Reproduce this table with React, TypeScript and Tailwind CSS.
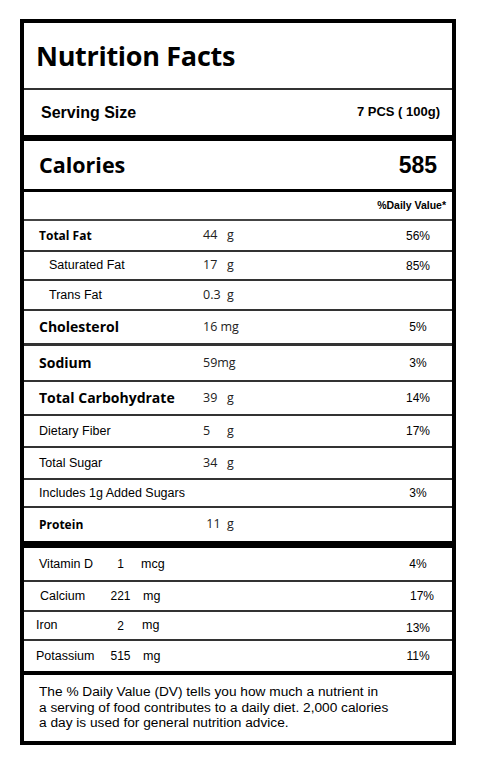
const sans = "font-['Liberation_Sans',Arial,sans-serif]";
const humanist = "font-['Open_Sans','Noto_Sans',sans-serif]";

type Row = {
  label: string;
  amount?: [string, string];
  dv?: string;
  h: string;
  border: string;
  kind: "bold" | "big" | "plain" | "indent";
};

const rows: Row[] = [
  { label: "Total Fat", amount: ["44", "g"], dv: "56%", h: "h-[31px]", border: "border-b-2", kind: "bold" },
  { label: "Saturated Fat", amount: ["17", "g"], dv: "85%", h: "h-[29px]", border: "border-b-2", kind: "indent" },
  { label: "Trans Fat", amount: ["0.3", "g"], h: "h-[30px]", border: "border-b-2", kind: "indent" },
  { label: "Cholesterol", amount: ["16 mg", ""], dv: "5%", h: "h-[35px]", border: "border-b-[3px]", kind: "big" },
  { label: "Sodium", amount: ["59mg", ""], dv: "3%", h: "h-[36px]", border: "border-b-2", kind: "big" },
  { label: "Total Carbohydrate", amount: ["39", "g"], dv: "14%", h: "h-[34px]", border: "border-b-2", kind: "big" },
  { label: "Dietary Fiber", amount: ["5", "g"], dv: "17%", h: "h-[32px]", border: "border-b-2", kind: "plain" },
  { label: "Total Sugar", amount: ["34", "g"], h: "h-[32px]", border: "border-b-2", kind: "plain" },
  { label: "Includes 1g Added Sugars", dv: "3%", h: "h-[28px]", border: "border-b-2", kind: "plain" },
  { label: "Protein", amount: ["\u00a011", "g"], h: "h-[40px]", border: "border-b-[7px] border-b-black", kind: "bold" },
];

const minerals = [
  { label: "Vitamin D", num: "1", unit: "mcg", dv: "4%", h: "h-[34px]", pl: "pl-[15px]", unitMl: "ml-[5px]", dvCls: "" },
  { label: "Calcium", num: "221", unit: "mg", dv: "17%", h: "h-[30px]", pl: "pl-[16px]", unitMl: "ml-[7px]", dvCls: "pl-[8px]" },
  { label: "Iron", num: "2", unit: "mg", dv: "13%", h: "h-[29px]", pl: "pl-[12px]", unitMl: "ml-[6px]", dvCls: "pt-[5px]" },
];

function labelClass(kind: Row["kind"]) {
  switch (kind) {
    case "bold":
      return `${humanist} font-bold text-[12px] pl-[15px]`;
    case "big":
      return `${humanist} font-bold text-[14px] pl-[15px]`;
    case "indent":
      return `${sans} text-[12.5px] pl-[25px]`;
    default:
      return `${sans} text-[12.5px] pl-[15px]`;
  }
}

export default function App() {
  return (
    <div className="min-h-[768px] bg-white pt-[19px] pl-[20px] text-black">
      <div className="w-[436px] border-4 border-black">
        {/* heading */}
        <div className="flex h-[67px] items-center border-b-2 border-[#333] pl-[12px]">
          <h1 className={`${humanist} text-[27px] font-bold leading-none tracking-[-0.3px] text-black`}>
            Nutrition Facts
          </h1>
        </div>
        <div className={`flex h-[51px] items-center justify-between border-b-[6px] border-black pl-[17px] pr-[12px] ${sans} font-bold`}>
          <span className="text-[16px] leading-none">Serving Size</span>
          <span className="mb-[3px] text-[13px] leading-none">7 PCS ( 100g)</span>
        </div>
        <div className="flex h-[51px] items-center justify-between border-b-[3px] border-black pl-[15px] pr-[15px]">
          <span className={`${humanist} text-[21.5px] font-bold leading-none`}>Calories</span>
          <span className={`${sans} text-[23px] font-bold leading-none`}>585</span>
        </div>
        <div className={`flex h-[29px] items-center justify-end border-b-2 border-[#444] pr-[6px] ${sans} text-[10.5px] font-bold`}>
          %Daily Value*
        </div>

        {rows.map((r) => (
          <div key={r.label} className={`flex items-center ${r.h} ${r.border} border-[#333]`}>
            <div className={`w-[179px] shrink-0 leading-none ${labelClass(r.kind)}`}>{r.label}</div>
            <div className={`flex flex-1 items-center ${humanist} text-[12.5px] leading-none text-[#222]`}>
              {r.amount && (
                <>
                  <span className={r.amount[1] ? "w-[24px]" : ""}>{r.amount[0]}</span>
                  <span>{r.amount[1]}</span>
                </>
              )}
            </div>
            <div className={`w-[50px] shrink-0 text-center ${sans} text-[12px] leading-none`}>{r.dv}</div>
            <div className="w-[9px] shrink-0" />
          </div>
        ))}

        {minerals.map((m) => (
          <div key={m.label} className={`flex items-center ${m.h} border-b-2 border-[#333] ${sans} text-[12.5px] leading-none`}>
            <div className={`w-[81px] shrink-0 ${m.pl}`}>{m.label}</div>
            <div className="w-[31px] shrink-0 text-center text-[12px]">{m.num}</div>
            <div className={`flex-1 ${m.unitMl}`}>{m.unit}</div>
            <div className={`w-[50px] shrink-0 text-center text-[12px] ${m.dvCls}`}>{m.dv}</div>
            <div className="w-[9px] shrink-0" />
          </div>
        ))}
        <div className={`flex h-[34px] items-center border-b-4 border-black ${sans} text-[12.5px] leading-none`}>
          <div className="w-[81px] shrink-0 pl-[12px]">Potassium</div>
          <div className="w-[31px] shrink-0 text-center text-[12px]">515</div>
          <div className="ml-[7px] flex-1">mg</div>
          <div className="w-[50px] shrink-0 text-center text-[12px]">11%</div>
          <div className="w-[9px] shrink-0" />
        </div>

        {/* footnote */}
        <div className={`h-[66px] pl-[15px] pt-[9px] ${sans} text-[13.7px] leading-[15.5px]`}>
          The % Daily Value (DV) tells you how much a nutrient in
          <br />
          a serving of food contributes to a daily diet. 2,000 calories
          <br />
          a day is used for general nutrition advice.
        </div>
      </div>
    </div>
  );
}
